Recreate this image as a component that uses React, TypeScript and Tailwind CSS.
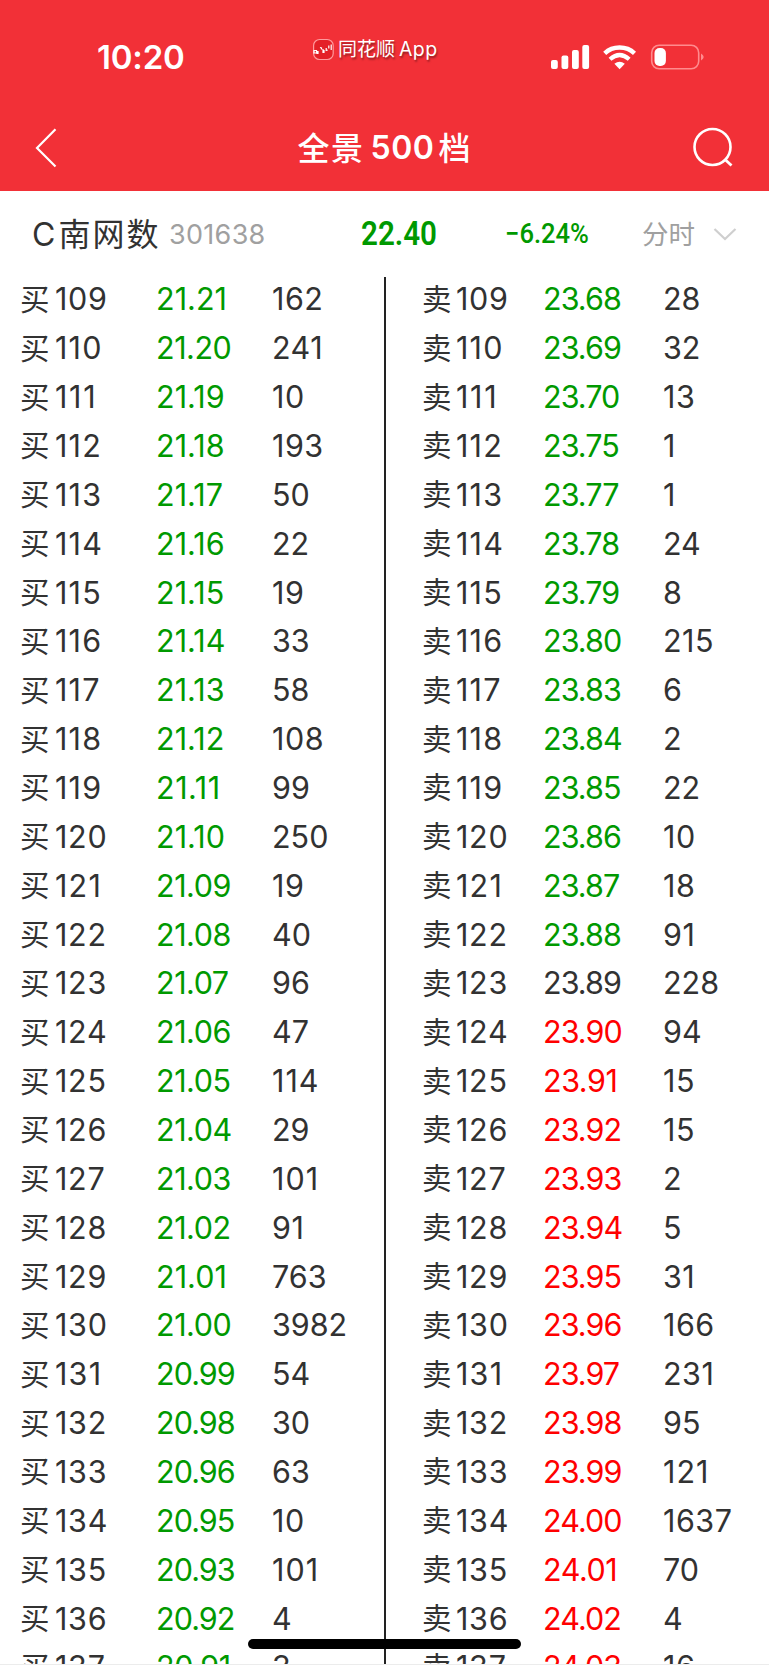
import React from 'react';

type Tone = 'down' | 'flat' | 'up';

interface Order {
	level: number;
	price: string;
	volume: number;
	tone: Tone;
}

const FIRST_LEVEL = 109;
const PREV_CLOSE = 23.89;

const bids: [string, number][] = [
	['21.21', 162], ['21.20', 241], ['21.19', 10], ['21.18', 193], ['21.17', 50], ['21.16', 22],
	['21.15', 19], ['21.14', 33], ['21.13', 58], ['21.12', 108], ['21.11', 99], ['21.10', 250],
	['21.09', 19], ['21.08', 40], ['21.07', 96], ['21.06', 47], ['21.05', 114], ['21.04', 29],
	['21.03', 101], ['21.02', 91], ['21.01', 763], ['21.00', 3982], ['20.99', 54], ['20.98', 30],
	['20.96', 63], ['20.95', 10], ['20.93', 101], ['20.92', 4], ['20.91', 3],
];

const asks: [string, number][] = [
	['23.68', 28], ['23.69', 32], ['23.70', 13], ['23.75', 1], ['23.77', 1], ['23.78', 24],
	['23.79', 8], ['23.80', 215], ['23.83', 6], ['23.84', 2], ['23.85', 22], ['23.86', 10],
	['23.87', 18], ['23.88', 91], ['23.89', 228], ['23.90', 94], ['23.91', 15], ['23.92', 15],
	['23.93', 2], ['23.94', 5], ['23.95', 31], ['23.96', 166], ['23.97', 231], ['23.98', 95],
	['23.99', 121], ['24.00', 1637], ['24.01', 70], ['24.02', 4], ['24.03', 16],
];

const toneClass: Record<Tone, string> = {
	down: 'text-[#009900]',
	flat: 'text-[#323232]',
	up: 'text-[#ff0000]',
};

const toOrders = (rows: [string, number][]): Order[] =>
	rows.map(([price, volume], i) => {
		const value = Number(price);
		const tone: Tone = value < PREV_CLOSE ? 'down' : value > PREV_CLOSE ? 'up' : 'flat';
		return { level: FIRST_LEVEL + i, price, volume, tone };
	});

const StatusBar: React.FC = () => (
	<div className="flex h-[104px] text-white">
		<div className="w-[312px] pl-[97px] pt-[37px] text-[33px] leading-[40px] font-semibold tracking-[-0.2px]">10:20</div>
		<div className="flex h-[26px] mt-[36px] w-[238px] items-center">
			<svg width="23" height="23" viewBox="0 0 23 23" fill="none">
				<rect x="1.6" y="1.5" width="19.6" height="20" rx="6" fill="#e42027" stroke="#ff9a9d" strokeWidth="1.2" />
				<path d="M2 12.5h2.5v2.5H2zM5 13.5h1v2H5zM8 9.5l1.500 .5v1.500M11 11v3.500h1V12M14.200 10v2.500l1.500-.5M16.800 7.500v3M19.200 6.500v5.500" stroke="#fff" strokeWidth="1.2" />
			</svg>
			<span className="ml-[3px] pt-px text-[19px] leading-none [text-shadow:1px_2px_2px_rgba(0,0,0,0.4)]">同花顺</span>
			<span className="ml-[4px] pt-px text-[19.5px] leading-none tracking-[0.4px] [text-shadow:1px_2px_2px_rgba(0,0,0,0.4)]">App</span>
		</div>
		<svg className="mt-[43px]" width="156" height="28" viewBox="0 0 156 28" fill="none">
			<g fill="#fff">
				<rect x="1" y="17" width="6.8" height="9" rx="2" />
				<rect x="11.5" y="12.5" width="6.8" height="13.5" rx="2" />
				<rect x="22" y="7" width="6.8" height="19" rx="2" />
				<rect x="32.3" y="2" width="6.8" height="24" rx="2" />
				<path d="M69.6 26.2 64.4 20.8Q69.6 16.6 74.8 20.8Z" />
			</g>
			<path d="M54.7 10.3C62.8 2.6 76.4 2.6 84.5 10.3" stroke="#fff" strokeWidth="4.4" />
			<path d="M60 16.3Q69.6 7.8 79.2 16.3" stroke="#fff" strokeWidth="4.2" />
			<rect x="101.7" y="2.2" width="47" height="23.6" rx="7.5" stroke="#ff8b8e" strokeWidth="1.6" />
			<rect x="104.5" y="5" width="11.4" height="18" rx="5" fill="#fff" />
			<path d="M151 10.5q5.4 3.5 0 7z" fill="#ff8b8e" />
		</svg>
	</div>
);

const TitleBar: React.FC = () => (
	<div className="flex h-[87px] items-center justify-between pl-[34px] pr-[35px] pb-[2px] text-white">
		<svg width="24" height="42" viewBox="0 0 24 42" fill="none">
			<path d="M21.5 3.2 3 22l18.5 18.5" stroke="#fff" strokeWidth="2.2" />
		</svg>
		<h1 className="ml-[18px] flex items-center pt-[2px] text-[32px] leading-none font-semibold">
			<span className="pb-[4px] font-['Noto_Sans_CJK_SC'] font-medium tracking-[1.5px]">全景</span>
			<span className="ml-[6px] tracking-[0.6px]">500</span>
			<span className="ml-[4px] pb-[4px] font-['Noto_Sans_CJK_SC'] font-medium">档</span>
		</h1>
		<svg width="42" height="42" viewBox="0 0 42 42" fill="none">
			<circle cx="20.5" cy="21" r="18" stroke="#fff" strokeWidth="2.6" />
			<path d="m32.5 33 7 6.5" stroke="#fff" strokeWidth="2.8" />
		</svg>
	</div>
);

const QuoteBar: React.FC = () => (
	<div className="flex h-[83px] items-center pl-[32px] pt-[4px] text-[#323232]">
		<div className="flex w-[137px] items-center leading-none">
			<span className="text-[32px]">C</span>
			<span className="ml-[3px] whitespace-nowrap text-[32px] tracking-[2px]">南网数</span>
		</div>
		<div className="w-[192px] text-[27px] leading-none tracking-[0.3px] text-[#a0a0a0]">301638</div>
		<div className="w-[144px] font-['Roboto'] text-[#009900]">
			<span className="inline-block origin-left scale-x-[0.91] text-[32.5px] leading-none font-semibold">22.40</span>
		</div>
		<div className="w-[137px] font-['Roboto'] text-[#009900]">
			<span className="inline-block origin-left scale-x-[0.93] text-[27.5px] leading-none font-medium">−6.24%</span>
		</div>
		<span className="text-[26.5px] leading-none text-[#a0a0a0]">分时</span>
		<svg className="ml-[18px]" width="24" height="16" viewBox="0 0 24 16" fill="none">
			<path d="m1.5 2 10.5 10L22.5 2" stroke="#cfcfcf" strokeWidth="2.2" />
		</svg>
	</div>
);

interface DigitsProps {
	value: string | number;
	spacing: number;
	className?: string;
}

// Inter's "1" is narrow, so give numbers full of ones a little more room
const Digits: React.FC<DigitsProps> = ({ value, spacing, className }) => {
	const text = String(value);
	const ones = text.split('1').length - 1;
	return (
		<span className={className} style={{ letterSpacing: `${spacing + ones * 0.5}px` }}>
			{text}
		</span>
	);
};

interface BookSideProps {
	label: string;
	orders: Order[];
	columns: string;
}

const BookSide: React.FC<BookSideProps> = ({ label, orders, columns }) => (
	<div className="pt-[1.2px] text-[30.5px] text-[#323232]">
		{orders.map((order) => (
			<div key={order.level} className={`grid h-[48.87px] items-center leading-none ${columns}`}>
				<span className="text-[29.5px]">{label}</span>
				<Digits value={order.level} spacing={0.2} />
				<Digits value={order.price} spacing={-0.95} className={toneClass[order.tone]} />
				<Digits value={order.volume} spacing={0} />
			</div>
		))}
	</div>
);

const App: React.FC = () => {
	return (
		<main className="relative h-[1665px] w-[769px] overflow-hidden bg-white font-['Inter','Noto_Sans_CJK_SC',sans-serif]">
			<header className="h-[191px] bg-[#f23037]">
				<StatusBar />
				<TitleBar />
			</header>
			<QuoteBar />
			<section className="flex h-[1390px] overflow-hidden">
				<div className="w-[384px] pl-[20px]">
					<BookSide label="买" orders={toOrders(bids)} columns="grid-cols-[35px_101px_116px_1fr]" />
				</div>
				<div className="mt-[3px] w-[2px] bg-[#222222]" />
				<div className="flex-1 pl-[36px]">
					<BookSide label="卖" orders={toOrders(asks)} columns="grid-cols-[34px_87px_120px_1fr]" />
				</div>
			</section>
			<div className="h-px bg-[#ececec]" />
			{/* home indicator */}
			<div className="absolute bottom-[16px] left-[248px] h-[10px] w-[273px] rounded-full bg-black" />
		</main>
	);
};

export default App;
